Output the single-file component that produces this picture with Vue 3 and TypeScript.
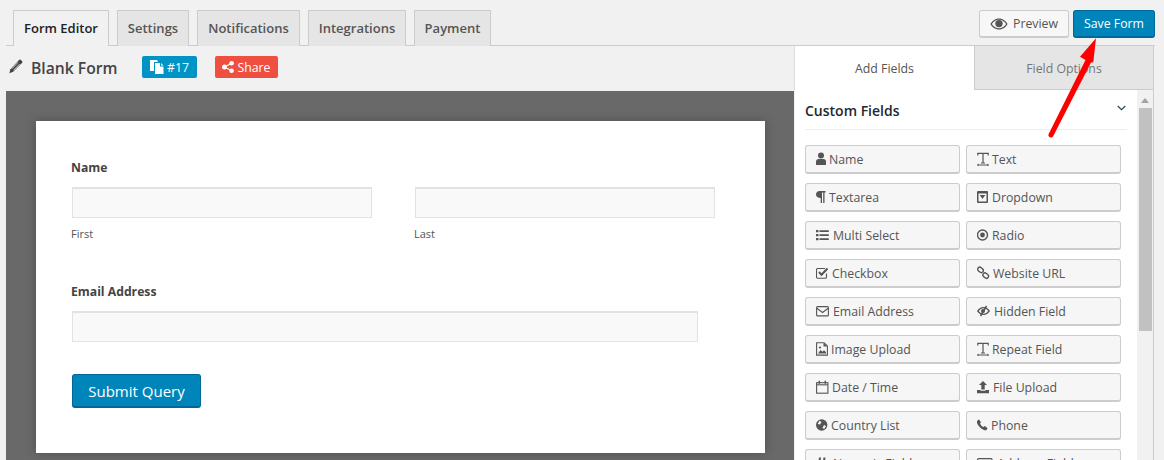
<script setup lang="ts">
interface Field { label: string; icon: string; offset: number }
interface Tab { label: string; width: number }
const tabs: Tab[] = [
  { label: 'Form Editor', width: 96 },
  { label: 'Settings', width: 72 },
  { label: 'Notifications', width: 103 },
  { label: 'Integrations', width: 98 },
  { label: 'Payment', width: 77 },
]
const fields: Field[] = [
  { label: 'Name', icon: 'user', offset: 13 }, { label: 'Text', icon: 'text', offset: 15 },
  { label: 'Textarea', icon: 'para', offset: 13 }, { label: 'Dropdown', icon: 'drop', offset: 15 },
  { label: 'Multi Select', icon: 'list', offset: 17 }, { label: 'Radio', icon: 'radio', offset: 15 },
  { label: 'Checkbox', icon: 'check', offset: 16 }, { label: 'Website URL', icon: 'link', offset: 16 },
  { label: 'Email Address', icon: 'mail', offset: 17 }, { label: 'Hidden Field', icon: 'hidden', offset: 17 },
  { label: 'Image Upload', icon: 'image', offset: 15 }, { label: 'Repeat Field', icon: 'text', offset: 15 },
  { label: 'Date / Time', icon: 'cal', offset: 16 }, { label: 'File Upload', icon: 'upload', offset: 16 },
  { label: 'Country List', icon: 'globe', offset: 15 }, { label: 'Phone', icon: 'phone', offset: 14 },
  { label: 'Numeric Field', icon: 'hash', offset: 17 }, { label: 'Address Field', icon: 'addr', offset: 20 },
]
</script>

<template>
  <div class="page">
    <div class="topbar">
      <nav class="tabs">
        <div v-for="(t, i) in tabs" :key="t.label" class="tab" :class="{ active: i === 0 }" :style="{ width: t.width + 'px' }">{{ t.label }}</div>
      </nav>
      <div class="actions">
        <button class="preview">
          <svg width="18" height="12" viewBox="0 0 18 12"><path d="M9 0.5C5 0.5 2 3 0.4 6 2 9 5 11.500 9 11.500S16 9 17.600 6C16 3 13 .5 9 .5Zm0 9.800C6 10.300 3.400 8.600 1.900 6 3.400 3.400 6 1.700 9 1.700S14.600 3.400 16.100 6C14.600 8.600 12 10.300 9 10.300Z" fill="#555"/><circle cx="9" cy="5.600" r="3.700" fill="#555"/></svg>
          Preview
        </button>
        <button class="save">Save Form</button>
      </div>
    </div>
    <div class="main">
      <section class="left">
        <header class="head">
          <svg class="pencil" width="14" height="15" viewBox="0 0 14 15"><path d="M10.300.8a1 1 0 0 1 1.400 0l1.500 1.500a1 1 0 0 1 0 1.400L4.200 12.800.4 14.200l1-4L10.300.8Z" fill="#444"/><path d="M9 3.400 2.800 9.800M10.700 5 4.500 11.400" stroke="#f1f1f1" stroke-width=".8"/></svg>
          <h1>Blank Form</h1>
          <span class="badge blue">
            <svg width="14" height="14" viewBox="0 0 14 14"><path d="M0 0h7l1 2H4v9H0V0Zm5 3h5v3.500h3.500V14H5V3Zm6 0 2.500 2.500H11V3Z" fill="#fff"/></svg>
            #17
          </span>
          <span class="badge red">
            <svg width="12" height="12" viewBox="0 0 12 12"><circle cx="2.500" cy="6" r="2.500" fill="#fff"/><circle cx="9.600" cy="2.300" r="2.300" fill="#fff"/><circle cx="9.600" cy="9.700" r="2.300" fill="#fff"/><path d="M2.500 6 9.600 2.300M2.500 6l7.100 3.700" stroke="#fff" stroke-width="1.200"/></svg>
            Share
          </span>
        </header>
        <div class="canvas">
          <form class="card" @submit.prevent>
            <div class="lbl">Name</div>
            <div class="names">
              <div class="col"><div class="inp"></div><div class="sub">First</div></div>
              <div class="col"><div class="inp"></div><div class="sub">Last</div></div>
            </div>
            <div class="lbl email">Email Address</div>
            <div class="inp wide"></div>
            <button class="submit">Submit Query</button>
          </form>
        </div>
      </section>
      <aside class="right">
        <div class="rtabs">
          <div class="rtab on">Add Fields</div>
          <div class="rtab">Field Options</div>
        </div>
        <div class="rbody">
          <div class="panel">
            <div class="ptitle">
              <span>Custom Fields</span>
              <svg width="9" height="6" viewBox="0 0 9 6"><path d="M.7 1 4.500 4.600 8.300 1" fill="none" stroke="#2e4453" stroke-width="1.200"/></svg>
            </div>
            <div class="grid">
              <div v-for="f in fields" :key="f.label + f.icon" class="fbtn">
                <span class="icbox" :style="{ width: f.offset + 'px' }">
                <svg class="ic" width="16" height="14" viewBox="0 0 16 14" fill="#555">
                  <g v-if="f.icon === 'user'"><circle cx="5" cy="3.500" r="3"/><path d="M0 13V9.500C0 7.800 1.500 7 2.500 7h5C9 7 10 8 10 9.500V13H0Z"/></g>
                  <g v-else-if="f.icon === 'text'" fill="none" stroke="#555"><path d="M.8 3.500V1.300h10.400v2.200M6 1.300v9.700M4 11h4" stroke-width="1.200"/><path d="M1 13h10" stroke-width="1"/><path d="M2 12 0 13l2 1M10 12l2 1-2 1" stroke-width=".7"/></g>
                  <path v-else-if="f.icon === 'para'" d="M3.500 1h6v1.500h-1V13H7.200V2.500H6V13H4.700V8C1.800 8 0 6.500 0 4.500S1.500 1 3.500 1Z"/>
                  <path v-else-if="f.icon === 'drop'" fill-rule="evenodd" d="M1 1h9a1 1 0 0 1 1 1v10a1 1 0 0 1-1 1H1a1 1 0 0 1-1-1V2a1 1 0 0 1 1-1Zm.5 2.500v8h8v-8h-8ZM2.700 5h5.600L5.500 9 2.700 5Z"/>
                  <path v-else-if="f.icon === 'list'" d="M0 2h2.500v2.300H0V2Zm0 4h2.500v2.300H0V6Zm0 4h2.500v2.300H0V10ZM3.500 2.300h9.300v1.800H3.500V2.300Zm0 4h9.300v1.800H3.500V6.300Zm0 4h9.300v1.800H3.500v-1.800Z"/>
                  <g v-else-if="f.icon === 'radio'"><circle cx="5.500" cy="7" r="5" fill="none" stroke="#555" stroke-width="1.400"/><circle cx="5.500" cy="7" r="2.400"/></g>
                  <g v-else-if="f.icon === 'check'" fill="none" stroke="#555"><path d="M10.500 7.500V11a1.300 1.300 0 0 1-1.300 1.300H1.500A1.300 1.300 0 0 1 .5 11V3.800A1.300 1.300 0 0 1 1.500 2.500h7.500" stroke-width="1.100"/><path d="M3 6l2.500 2.800 6-6.300" stroke-width="2"/></g>
                  <g v-else-if="f.icon === 'link'" fill="none" stroke="#555" stroke-width="1.400"><rect x=".5" y="1.800" width="6" height="4.200" rx="2.100" transform="rotate(40 3.500 3.900)"/><rect x="5.700" y="7.500" width="6" height="4.200" rx="2.100" transform="rotate(40 8.700 9.600)"/></g>
                  <g v-else-if="f.icon === 'mail'" fill="none" stroke="#555" stroke-width="1.100"><rect x=".6" y="2.600" width="11.800" height="9.300" rx="1"/><path d="M.8 4.200 6.500 8.500l5.700-4.300"/></g>
                  <g v-else-if="f.icon === 'hidden'"><path d="M6.500 3C3.500 3 1.300 5 0 7 1.300 9 3.500 11 6.500 11s5.200-2 6.500-4C11.700 5 9.500 3 6.500 3Zm0 6.700C4.500 9.700 2.800 8.500 1.800 7 2.800 5.500 4.500 4.300 6.500 4.300S10.200 5.500 11.200 7C10.200 8.500 8.500 9.700 6.500 9.700Z"/><path d="M3.500 12 9.500 2" stroke="#555" stroke-width="1.500"/><circle cx="6" cy="7" r="2"/></g>
                  <g v-else-if="f.icon === 'image'"><path d="M.6.800h7.500l3.300 3.300v9H.6V.8Z" fill="none" stroke="#555" stroke-width="1.100"/><path d="M2 11.500 4.500 8l2 1.700L8 8.300l2 2v1.200H2Z"/><circle cx="4" cy="5.500" r="1.100"/><path d="M7.500 1v3.500H11"/></g>
                  <g v-else-if="f.icon === 'cal'" fill="none" stroke="#555"><rect x=".6" y="2.700" width="11.300" height="10.500" stroke-width="1.100"/><path d="M.6 4.800h11.300" stroke-width="1.100"/><path d="M3.300.8v3M9.300 .8v3" stroke-width="1.500"/></g>
                  <path v-else-if="f.icon === 'upload'" d="M6 1 10 5H7.700v4.500H4.300V5H2L6 1ZM0 10h3.500v.700h5V10H12v3.300H0V10Z"/>
                  <g v-else-if="f.icon === 'globe'"><circle cx="5.700" cy="7" r="5.700"/><path d="M3.500 2.800 5.500 4 4 6.500 1.700 6l1.800-3.200ZM8 7l2 1-1.800 3-1.700-1L8 7Z" fill="#f6f6f6"/></g>
                  <path v-else-if="f.icon === 'phone'" d="M2 1.500 4 4.300 3 5.500c.6 1.500 2 3 3.500 3.500l1.200-1 2.800 2-.8 1.800c-.5.500-1.300.700-2.200.4C4 11 1.200 8 0 5c-.3-.9 0-1.800.4-2.400L2 1.500Z"/>
                  <path v-else-if="f.icon === 'hash'" fill-rule="evenodd" d="M3 1.500h2L4.500 5H7l.5-3.500h2L9 5h3v2H8.700l-.3 2H11v2H8l-.4 2.500h-2L6 11H3.500l-.4 2.500h-2L1.500 11H0V9h1.800l.3-2H0V5h2.500L3 1.500ZM4.200 7l-.3 2h2.500l.3-2H4.200Z"/>
                  <g v-else fill="none" stroke="#555" stroke-width="1.200"><rect x=".6" y="2.600" width="14.400" height="9.500" rx="1"/><path d="M2.500 5h5M2.500 7.500h5M9.500 5h3.500v3.500h-3.500z"/></g>
                </svg>
                </span>
                <span>{{ f.label }}</span>
              </div>
            </div>
          </div>
          <div class="scrollbar">
            <div class="up"></div>
            <div class="thumb"></div>
          </div>
        </div>
      </aside>
    </div>
    <svg class="arrow" width="60" height="110" viewBox="0 0 60 110">
      <path d="M48 2.300 32 20.700 37.500 24 .8 97.800A2.500 2.500 0 0 0 5.200 100.200L43 26.500 45.300 26.300Z" fill="#f00"/>
    </svg>
  </div>
</template>

<style>
html, body { margin: 0; background: #f1f1f1; }
</style>

<style scoped>
.page {
  position: relative;
  width: 1164px;
  height: 460px;
  overflow: hidden;
  box-sizing: border-box;
  padding: 10px 9px 0 6px;
  background: #f1f1f1;
  font-family: "Open Sans", sans-serif;
  color: #444;
}
.topbar { display: flex; justify-content: space-between; height: 35px; }
.tabs { display: flex; gap: 8px; padding-left: 7px; }
.tab {
  box-sizing: border-box;
  height: 36px;
  border: 1px solid #ccc;
  border-bottom: 0;
  background: #e5e5e5;
  color: #555;
  font-size: 13px;
  font-weight: 600;
  line-height: 35px;
  text-align: center;
  white-space: nowrap;
}
.tab.active { position: relative; z-index: 1; background: #f1f1f1; color: #222; }
.actions { display: flex; gap: 4px; height: 28px; }
button { font-family: inherit; cursor: pointer; }
.preview {
  width: 90px;
  display: flex;
  align-items: center;
  justify-content: center;
  gap: 5px;
  padding: 0;
  border: 1px solid #ccc;
  border-bottom-width: 2px;
  border-radius: 3px;
  background: #f7f7f7;
  color: #555;
  font-size: 12.300px;
}
.save {
  width: 82px;
  padding: 0;
  border: 1px solid #006799;
  border-bottom-width: 2px;
  border-radius: 3px;
  background: #0085ba;
  color: #fff;
  font-size: 12.300px;
}
.main { display: flex; height: 415px; border-top: 1px solid #ccc; }
.left { width: 788px; display: flex; flex-direction: column; flex: none; }
.head { height: 45px; display: flex; align-items: center; flex: none; box-sizing: border-box; padding: 0 0 6px 3px; }
.pencil { margin-right: 8px; margin-top: 1px; }
h1 { margin: 4px 24px 0 0; width: 87px; font-size: 15.700px; font-weight: 600; color: #444; white-space: nowrap; }
.badge {
  display: flex;
  align-items: center;
  justify-content: center;
  gap: 3px;
  height: 22px;
  border-radius: 2px;
  color: #fff;
  font-size: 12.300px;
  margin-top: 3px;
}
.blue { width: 55px; background: #0093c6; margin-right: 18px; }
.red { width: 63px; background: #ee4f3f; }
.canvas {
  flex: 1;
  background: #696969;
  padding: 30px 29px 0 30px;
}
.card {
  box-sizing: border-box;
  height: 332px;
  background: #fff;
  box-shadow: 0 0 10px rgba(0, 0, 0, .25);
  padding: 37px 50px 0 35px;
}
.lbl { font-size: 12.200px; font-weight: 700; line-height: 20px; color: #444; }
.names { display: flex; gap: 42px; margin-top: 9px; }
.col { width: 301px; }
.inp {
  box-sizing: border-box;
  height: 31px;
  margin-left: 1px;
  background: #f9f9f9;
  border: 1px solid #e2e2e2;
  border-top-width: 2px;
}
.sub { font-size: 11px; line-height: 16px; margin-top: 8px; color: #555; }
.email { margin-top: 40px; }
.wide { width: 626px; margin-top: 9px; }
.submit {
  display: block;
  width: 129px;
  height: 34px;
  margin: 32px 0 0 1px;
  padding: 0;
  border: 1px solid #006799;
  border-bottom-width: 2px;
  border-radius: 3px;
  background: #0085ba;
  color: #fff;
  font-size: 15px;
}
.right { margin-left: 1px; width: 359px; flex: none; display: flex; flex-direction: column; }
.rtabs { display: flex; height: 44px; flex: none; }
.rtab {
  flex: 1;
  text-align: center;
  line-height: 46px;
  font-size: 12.300px;
  color: #777;
  background: #e5e5e5;
  border-bottom: 1px solid #ccc;
  border-right: 1px solid #ccc;
  box-sizing: border-box;
}
.rtab.on { background: #fff; color: #555; border-bottom: 0; border-left: 1px solid #ddd; margin-left: -1px; flex: 0 0 181px; }
.rbody { flex: 1; display: flex; background: #fff; border-right: 1px solid #ccc; min-height: 0; }
.panel { width: 342px; flex: none; box-sizing: border-box; padding: 0 10px; }
.ptitle {
  height: 40px;
  box-sizing: border-box;
  padding-top: 2px;
  border-bottom: 1px solid #eee;
  display: flex;
  align-items: center;
  justify-content: space-between;
  font-size: 14px;
  font-weight: 600;
  color: #23282d;
  width: 322px;
}
.ptitle svg { margin: -6px 1px 0 0; }
.grid {
  display: grid;
  grid-template-columns: 155px 155px;
  column-gap: 6px;
  row-gap: 9px;
  margin-top: 15px;
}
.fbtn {
  box-sizing: border-box;
  height: 29px;
  display: flex;
  align-items: center;
  padding-left: 10px;
  background: #f6f6f6;
  border: 1px solid #ccc;
  border-bottom-width: 2px;
  border-radius: 3px;
  font-size: 12.300px;
  color: #555;
  white-space: nowrap;
}
.icbox { display: flex; align-items: center; flex: none; }
.ic { flex: none; }
.scrollbar { flex: 1; background: #f1f1f1; display: flex; flex-direction: column; align-items: center; }
.up { width: 0; height: 0; margin: 8px 0 5px; border: 4px solid transparent; border-top: 0; border-bottom: 5px solid #a3a3a3; }
.thumb { width: 13px; height: 223px; background: #c1c1c1; }
.arrow { position: absolute; left: 1048px; top: 36px; }
</style>
